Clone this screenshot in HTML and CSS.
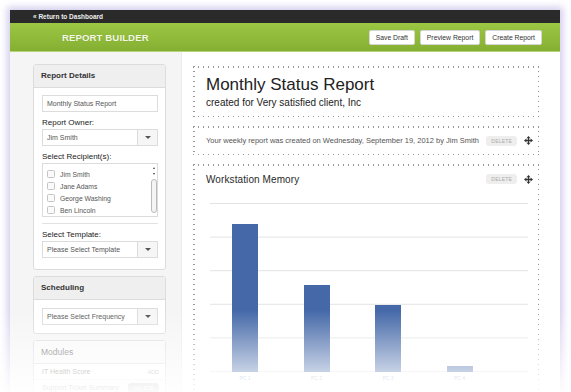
FILE: index.html
```html
<!DOCTYPE html>
<html lang="en">
<head>
  <meta charset="UTF-8">
  <meta name="viewport" content="width=device-width, initial-scale=1.0">
  <title>Report Builder</title>
  <link rel="stylesheet" href="styles.css">
</head>
<body>
  <div class="app-window">
    <div class="top-bar">&laquo; Return to Dashboard</div>
    <div class="header">
      <h1>REPORT BUILDER</h1>
      <div class="header-actions">
        <button>Save Draft</button>
        <button>Preview Report</button>
        <button>Create Report</button>
      </div>
    </div>
    <div class="content">
      <div class="sidebar">
        <div class="card">
          <div class="card-header">Report Details</div>
          <div class="card-body">
            <div class="field">Monthly Status Report</div>
            <label>Report Owner:</label>
            <div class="select">
              <span class="select-value">Jim Smith</span>
              <span class="select-arrow"></span>
            </div>
            <label>Select Recipient(s):</label>
            <div class="listbox">
              <div class="list-items">
                <div class="list-item"><span class="checkbox"></span>Jim Smith</div>
                <div class="list-item"><span class="checkbox"></span>Jane Adams</div>
                <div class="list-item"><span class="checkbox"></span>George Washing</div>
                <div class="list-item"><span class="checkbox"></span>Ben Lincoln</div>
              </div>
              <div class="scrollbar">
                <span class="scroll-up"></span>
                <span class="scroll-down"></span>
                <span class="scroll-thumb"></span>
              </div>
            </div>
            <hr>
            <label>Select Template:</label>
            <div class="select">
              <span class="select-value">Please Select Template</span>
              <span class="select-arrow"></span>
            </div>
          </div>
        </div>
        <div class="card">
          <div class="card-header">Scheduling</div>
          <div class="card-body compact">
            <div class="select">
              <span class="select-value">Please Select Frequency</span>
              <span class="select-arrow"></span>
            </div>
          </div>
        </div>
        <div class="card">
          <div class="card-header plain">Modules</div>
          <div class="module-row"><span>IT Health Score</span><span class="add">ADD</span></div>
          <div class="module-row"><span>Support Ticket Summary</span><span class="badge dark">DELETE</span></div>
        </div>
      </div>
      <div class="main">
        <div class="block title-block">
          <h2>Monthly Status Report</h2>
          <p>created for Very satisfied client, Inc</p>
        </div>
        <div class="block note-block">
          <span class="note">Your weekly report was created on Wednesday, September 19, 2012 by Jim Smith</span>
          <span class="badge">DELETE</span>
          <svg class="move" width="9" height="9" viewBox="0 0 10 10"><path d="M5 0L7.2 2.6H5.7V4.3H7.4V2.8L10 5L7.4 7.2V5.7H5.7V7.4H7.2L5 10L2.8 7.4H4.3V5.7H2.6V7.2L0 5L2.6 2.8V4.3H4.3V2.6H2.8Z" fill="#333"/></svg>
        </div>
        <div class="block chart-block">
          <div class="chart-head">
            <span class="chart-title">Workstation Memory</span>
            <span class="badge">DELETE</span>
            <svg class="move" width="9" height="9" viewBox="0 0 10 10"><path d="M5 0L7.2 2.6H5.7V4.3H7.4V2.8L10 5L7.4 7.2V5.7H5.7V7.4H7.2L5 10L2.8 7.4H4.3V5.7H2.6V7.2L0 5L2.6 2.8V4.3H4.3V2.6H2.8Z" fill="#333"/></svg>
          </div>
          <div class="chart">
            <div class="bar-col"><div class="bar" style="height: 148px"></div><span>PC 1</span></div>
            <div class="bar-col"><div class="bar" style="height: 87px"></div><span>PC 2</span></div>
            <div class="bar-col"><div class="bar" style="height: 67px"></div><span>PC 3</span></div>
            <div class="bar-col"><div class="bar" style="height: 6px"></div><span>PC 4</span></div>
          </div>
        </div>
      </div>
    </div>
  </div>
  <div class="fade"></div>
</body>
</html>
```

FILE: styles.css
```css
body {
  margin: 0;
  height: 392px;
  overflow: hidden;
  background: #fff;
  font-family: 'Liberation Sans', Arial, sans-serif;
  color: #333;
  position: relative;
}
.app-window {
  margin: 10px 0 0 10px;
  width: 550px;
  height: 400px;
  background: #fff;
  box-shadow: 0 0 7px 3px rgba(110, 90, 200, 0.3);
  overflow: hidden;
}
.top-bar {
  height: 13px;
  line-height: 13px;
  background: #2a2a2a;
  color: #eee;
  font-size: 6.5px;
  font-weight: bold;
  padding-left: 23px;
}
.header {
  height: 28px;
  background: linear-gradient(#9cc744, #84af32);
  display: flex;
  align-items: center;
  justify-content: space-between;
  padding: 0 18px 0 52px;
  border-bottom: 1px solid #b7d27a;
}
.header h1 {
  margin: 0;
  font-size: 9.6px;
  color: #f2f7e4;
  letter-spacing: 0.1px;
  text-shadow: 0 0 1px rgba(0, 0, 0, 0.15);
}
.header-actions {
  display: flex;
  gap: 5px;
}
.header-actions button {
  height: 15px;
  padding: 0 6px;
  background: #fff;
  border: 1px solid #d6d6d6;
  border-radius: 2px;
  font-family: inherit;
  font-size: 6.8px;
  color: #333;
}
.content {
  display: flex;
  height: 340px;
}
.sidebar {
  width: 133px;
  padding: 12px 15px 0 23px;
  background: #f5f5f5;
  border-right: 1px solid #ebebeb;
}
.card {
  background: #fff;
  border: 1px solid #dcdcdc;
  border-radius: 3px;
  margin-bottom: 6px;
}
.card-header {
  height: 22px;
  line-height: 22px;
  padding-left: 7px;
  background: #efefef;
  border-bottom: 1px solid #dcdcdc;
  font-size: 8px;
  font-weight: bold;
  color: #333;
}
.card-header.plain {
  background: #f9f9f9;
  font-weight: normal;
  font-size: 8.5px;
  color: #666;
}
.card-body {
  padding: 7px 7px 11px 8px;
}
.card-body.compact {
  padding: 8px 7px 8px 8px;
}
.field, .select {
  height: 15px;
  border: 1px solid #dcdcdc;
  background: #fff;
  font-size: 7px;
  color: #555;
  display: flex;
  align-items: center;
}
.field {
  padding-left: 4px;
}
.select-value {
  flex: 1;
  padding-left: 4px;
}
.select-arrow {
  width: 19px;
  height: 100%;
  border-left: 1px solid #dcdcdc;
  background: #f6f6f6;
  display: flex;
  align-items: center;
  justify-content: center;
}
.select-arrow::after {
  content: "";
  border-left: 3px solid transparent;
  border-right: 3px solid transparent;
  border-top: 3.5px solid #555;
}
label {
  display: block;
  font-size: 8px;
  line-height: 10px;
  margin: 6px 0 1px;
  color: #222;
}
.listbox {
  height: 52px;
  border: 1px solid #dcdcdc;
  display: flex;
}
.list-items {
  flex: 1;
  padding: 4px 0 0 4px;
}
.list-item {
  height: 12px;
  display: flex;
  align-items: center;
  font-size: 6.8px;
  color: #555;
}
.checkbox {
  width: 6px;
  height: 6px;
  border: 1px solid #c4c4c4;
  border-radius: 1.5px;
  background: #fafafa;
  margin-right: 5px;
}
.scrollbar {
  width: 7px;
  display: flex;
  flex-direction: column;
  align-items: center;
  padding-top: 3px;
}
.scroll-up, .scroll-down {
  width: 0;
  height: 0;
  border-left: 1.5px solid transparent;
  border-right: 1.5px solid transparent;
  margin-bottom: 4px;
}
.scroll-up {
  border-bottom: 2.5px solid #444;
}
.scroll-down {
  border-top: 2.5px solid #444;
}
.scroll-thumb {
  width: 4px;
  height: 32px;
  border: 1px solid #bbb;
  border-radius: 3px;
  background: #f4f4f4;
}
hr {
  border: 0;
  border-top: 1px solid #e2e2e2;
  margin: 6px 0 0;
}
.module-row {
  height: 15px;
  display: flex;
  align-items: center;
  justify-content: space-between;
  padding: 0 6px 0 8px;
  border-bottom: 1px solid #eee;
  font-size: 7px;
  color: #666;
}
.add {
  font-size: 5.5px;
  color: #999;
}
.main {
  flex: 1;
  padding: 14px 21px 0 11px;
}
.block {
  background-image:
    linear-gradient(to right, #999 1.5px, transparent 1.5px),
    linear-gradient(to right, #999 1.5px, transparent 1.5px),
    linear-gradient(to bottom, #999 1.5px, transparent 1.5px),
    linear-gradient(to bottom, #999 1.5px, transparent 1.5px);
  background-size: 5px 1.5px, 5px 1.5px, 1.5px 5px, 1.5px 5px;
  background-repeat: repeat-x, repeat-x, repeat-y, repeat-y;
  background-position: top left, bottom left, top left, top right;
  margin-bottom: 9px;
}
.title-block {
  height: 51px;
  padding: 9px 13px 0;
  box-sizing: border-box;
}
.title-block h2 {
  margin: 0;
  font-size: 17px;
  line-height: 20px;
  font-weight: normal;
  color: #222;
}
.title-block p {
  margin: 1px 0 0;
  font-size: 10px;
  line-height: 13px;
  color: #222;
}
.note-block {
  height: 29px;
  display: flex;
  align-items: center;
  padding: 0 6px 0 13px;
}
.note {
  flex: 1;
  font-size: 7.5px;
  color: #555;
}
.badge {
  font-size: 5px;
  color: #aaa;
  background: #eee;
  border-radius: 3px;
  padding: 2px 5px;
  letter-spacing: 0.2px;
}
.badge.dark {
  background: #bbb;
  color: #fff;
}
.move {
  margin-left: 7px;
}
.chart-block {
  height: 230px;
  padding: 0 11px 0 17px;
}
.chart-head {
  height: 30px;
  display: flex;
  align-items: center;
  margin: 0 -5px 0 -4px;
}
.chart-title {
  flex: 1;
  font-size: 10px;
  color: #2a2a2a;
  letter-spacing: 0.1px;
}
.chart {
  margin-top: 9px;
  height: 169px;
  background-image: linear-gradient(#e3e3e3 1px, transparent 1px);
  background-size: 100% 33.6px;
  display: flex;
  align-items: flex-end;
  gap: 45.5px;
  padding-left: 22px;
}
.bar-col {
  width: 26px;
  position: relative;
}
.bar {
  background: #4468a8;
}
.bar-col span {
  position: absolute;
  top: 100%;
  left: 0;
  width: 100%;
  margin-top: 3px;
  text-align: center;
  font-size: 5px;
  color: #7890b8;
}
.fade {
  position: absolute;
  left: 0;
  right: 0;
  top: 310px;
  height: 82px;
  background: linear-gradient(rgba(255, 255, 255, 0), rgba(255, 255, 255, 0.93));
}
```
